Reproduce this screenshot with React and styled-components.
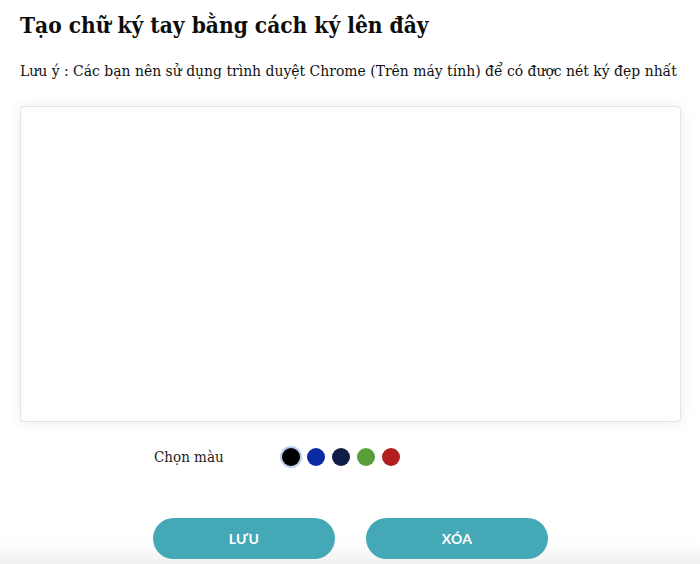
import styled, { createGlobalStyle } from 'styled-components';

const GlobalStyle = createGlobalStyle`
  html, body {
    margin: 0;
    padding: 0;
    background: #ffffff;
  }
  * {
    box-sizing: border-box;
  }
`;

const Page = styled.div`
  width: 700px;
  height: 564px;
  overflow: hidden;
  padding: 0 19px 0 20px;
  background: linear-gradient(to bottom, #ffffff 0, #ffffff 540px, #f1f1f1 564px);
  font-family: "DejaVu Serif", "Liberation Serif", serif;
  font-stretch: condensed;
  color: #111;
`;

const Title = styled.h1`
  margin: 0;
  padding-top: 8px;
  font-size: 22.5px;
  line-height: 34px;
  font-weight: 700;
  white-space: nowrap;
  color: #0d0d0d;
`;

const Note = styled.p`
  margin: 18px 0 0;
  font-size: 15.5px;
  line-height: 22px;
  white-space: nowrap;
  color: #111;
`;

const Board = styled.div`
  margin-top: 24px;
  height: 316px;
  background: #fff;
  border: 1px solid #e4e4e4;
  border-radius: 4px;
  box-shadow: 0 1px 14px rgba(0, 0, 0, 0.08);
`;

const ColorRow = styled.div`
  display: flex;
  align-items: center;
  margin-top: 26px;
  padding-left: 134px;
`;

const Label = styled.span`
  font-size: 15px;
  width: 128px;
  color: #222;
`;

const Swatches = styled.div`
  display: flex;
  gap: 7px;
`;

const Swatch = styled.span`
  width: 18px;
  height: 18px;
  border-radius: 50%;
  background: ${p => p.$color};
  box-shadow: ${p => (p.$active ? '0 0 0 2px #b9cdf0' : 'none')};
`;

const Actions = styled.div`
  display: flex;
  justify-content: center;
  gap: 31px;
  margin-top: 52px;
`;

const Button = styled.button`
  width: 182px;
  height: 41px;
  border: none;
  border-radius: 21px;
  background: #44a8b7;
  color: #fff;
  font-family: Lato, "Open Sans", sans-serif;
  font-weight: 700;
  font-size: 14px;
  letter-spacing: 0.3px;
`;

const colors = ['#000000', '#0a2ba3', '#101d47', '#5a9d3b', '#b01e20'];

export default function App() {
  return (
    <>
      <GlobalStyle />
      <Page>
        <Title>Tạo chữ ký tay bằng cách ký lên đây</Title>
        <Note>Lưu ý : Các bạn nên sử dụng trình duyệt Chrome (Trên máy tính) để có được nét ký đẹp nhất</Note>
        <Board />
        <ColorRow>
          <Label>Chọn màu</Label>
          <Swatches>
            {colors.map((c, i) => (
              <Swatch key={c} $color={c} $active={i === 0} />
            ))}
          </Swatches>
        </ColorRow>
        <Actions>
          <Button>LƯU</Button>
          <Button>XÓA</Button>
        </Actions>
      </Page>
    </>
  );
}
